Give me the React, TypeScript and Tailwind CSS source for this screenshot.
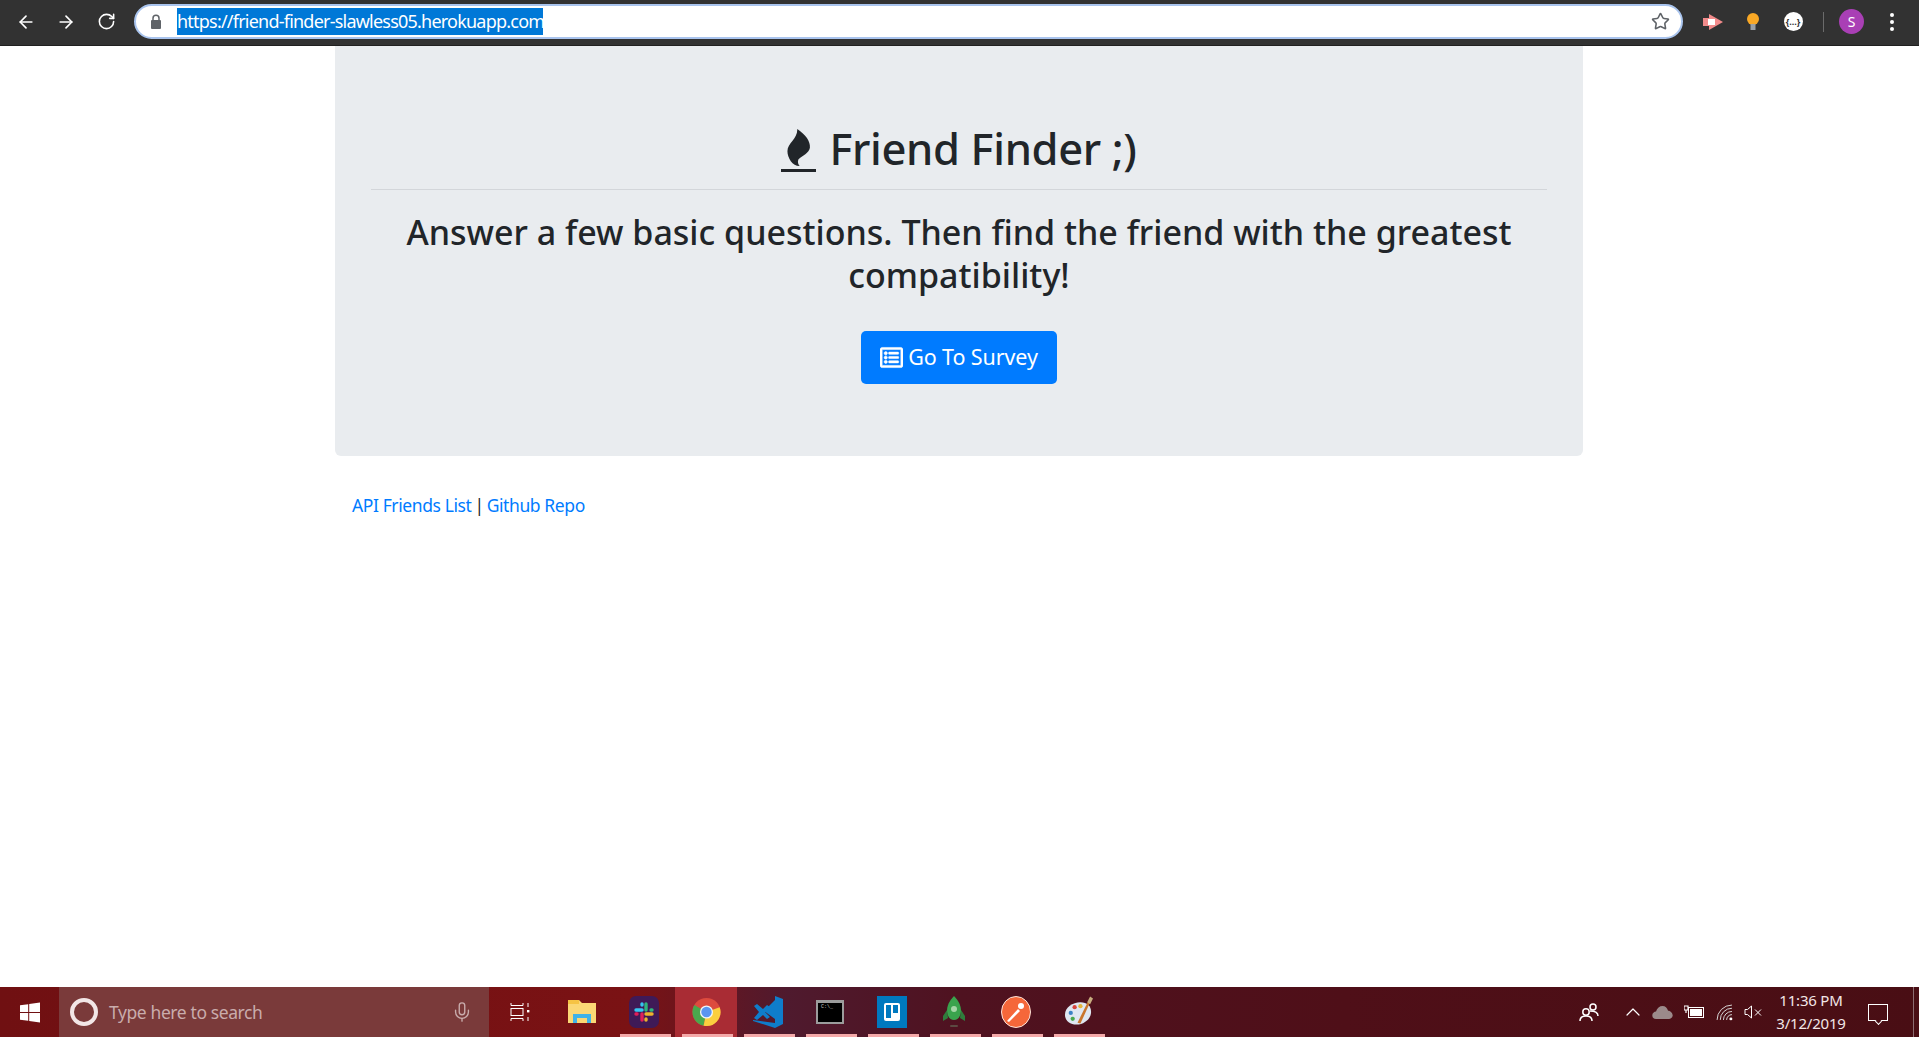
import React from 'react';
import { ArrowLeft, ArrowRight, RotateCw, Star, Mic, ChevronUp } from 'lucide-react';
import { FaRegListAlt } from 'react-icons/fa';

const Flame = () => (
  <span className="inline-flex flex-col items-center w-[35px] mr-[13px] mt-[4px]">
    <svg viewBox="145 78 70 112" className="w-[24px] h-[37px] fill-[#212529]">
      <path d="M175 78C200 95 215 115 213 135C211 150 190 160 178 170C175 178 178 185 182 190C160 190 145 165 145 145C145 120 175 110 175 78Z" />
    </svg>
    <span className="mt-[3px] h-[3px] w-[35px] bg-[#212529]" />
  </span>
);

const Browser = () => (
  <header className="h-[46px] shrink-0 flex items-center bg-[#323232] border-b border-[#202020] pl-[6px] pb-[3px] pt-[1px]">
    <div className="w-[40px] flex justify-center text-white"><ArrowLeft size={20} strokeWidth={2} /></div>
    <div className="w-[40px] flex justify-center text-white"><ArrowRight size={20} strokeWidth={2} /></div>
    <div className="w-[40px] flex justify-center text-white"><RotateCw size={19} strokeWidth={2} /></div>
    <div className="ml-[8px] w-[1549px] h-[35px] rounded-full bg-white border-2 border-[#a9c4ee] flex items-center pl-[14px] pr-[11px]">
      <svg viewBox="0 0 12 15" className="w-[12px] h-[15px]">
        <path d="M3 7V4.2a3 3 0 0 1 6 0V7" fill="none" stroke="#5f6368" strokeWidth="1.5" />
        <rect x="1" y="6" width="10" height="9" rx="1" fill="#5f6368" />
      </svg>
      <span className="ml-[15px] h-[27px] leading-[27px] w-[366px] bg-[#0078d7] text-white text-[18px] tracking-[-0.78px] whitespace-nowrap">
        https://friend-finder-slawless05.herokuapp.com
      </span>
      <Star size={19} strokeWidth={2} className="ml-auto text-[#5f6368]" />
    </div>
    <div className="ml-[10px] w-[40px] flex justify-center">
      <svg viewBox="0 0 20 16" className="w-[20px] h-[16px]">
        <path d="M0 4h6V0l14 8-14 8v-4H0z" fill="#f28b8b" />
        <rect x="5" y="5" width="7" height="6" fill="#fff" />
      </svg>
    </div>
    <div className="w-[40px] flex justify-center">
      <svg viewBox="0 0 12 18" className="w-[12px] h-[18px]">
        <circle cx="6" cy="6" r="6" fill="#f9a825" />
        <rect x="3.5" y="11" width="5" height="6" fill="#9aa0a6" />
      </svg>
    </div>
    <div className="w-[40px] flex justify-center">
      <span className="w-[19px] h-[19px] rounded-full bg-white text-[#333] text-[9px] font-bold leading-[19px] text-center">{'{...}'}</span>
    </div>
    <div className="ml-[10px] w-px h-[20px] bg-[#6b6b6b]" />
    <div className="ml-[15px] w-[25px] h-[25px] rounded-full bg-[#a93fb5] text-white text-[14px] leading-[25px] text-center">S</div>
    <div className="ml-[26px] flex flex-col gap-[3px]">
      <span className="w-[4px] h-[4px] rounded-full bg-white" />
      <span className="w-[4px] h-[4px] rounded-full bg-white" />
      <span className="w-[4px] h-[4px] rounded-full bg-white" />
    </div>
  </header>
);

const Slot = ({ children, active, bar }: { children: React.ReactNode; active?: boolean; bar?: boolean }) => (
  <div className={`relative w-[62px] h-full flex items-center justify-center ${active ? 'bg-[#a92c34]' : ''}`}>
    {children}
    {bar && <span className="absolute bottom-0 left-[7px] right-[4px] h-[3px] bg-[#f4a9a9]" />}
  </div>
);

const Files = () => (
  <svg viewBox="0 0 28 26" className="w-[28px] h-[26px]">
    <path d="M0 1h11l3 3h14v20H0z" fill="#fbd775" />
    <rect x="0" y="1" width="11" height="4" fill="#f6c344" />
    <path d="M5 24V15h18v9h-4v-5H9v5z" fill="#3fb2e8" />
    <rect x="9" y="19" width="10" height="5" fill="#fbd775" />
  </svg>
);

const Slack = () => (
  <div className="w-[30px] h-[32px] rounded-[7px] bg-[#3f1a57] flex items-center justify-center">
    <svg viewBox="0 0 20 20" className="w-[20px] h-[20px]" strokeWidth="3.4" strokeLinecap="round">
      <path d="M2 8h6" stroke="#36c5f0" />
      <path d="M12 2v6" stroke="#2eb67d" />
      <path d="M12 12h6" stroke="#ecb22e" />
      <path d="M8 12v6" stroke="#e01e5a" />
      <path d="M8 2v1" stroke="#36c5f0" />
      <path d="M18 8h-1" stroke="#2eb67d" />
      <path d="M12 18v-1" stroke="#ecb22e" />
      <path d="M2 12h1" stroke="#e01e5a" />
    </svg>
  </div>
);

const Chrome = () => (
  <svg viewBox="0 0 30 30" className="w-[29px] h-[30px]">
    <circle cx="15" cy="15" r="14.5" fill="#dd4b3e" />
    <path d="M15 15L2.4 7.7A14.5 14.5 0 0 0 12 29.2z" fill="#4aa84d" />
    <path d="M15 15L28.6 10A14.5 14.5 0 0 1 12 29.2z" fill="#fbcf3f" />
    <circle cx="15" cy="15" r="6.8" fill="#f4f4f4" />
    <circle cx="15" cy="15" r="5.4" fill="#5a95f0" />
  </svg>
);

const VsCode = () => (
  <svg viewBox="0 0 30 32" className="w-[30px] h-[32px]">
    <path d="M22 0l8 3v25l-8 4L0 25l0-1 22 3z" fill="#0f7dcb" />
    <path d="M22 4v19L11 15z" fill="#0f7dcb" />
    <path d="M1 10l3-2 6 5 4-4 3 2-5 5 5 5-3 2-4-4-6 5-3-2 5-6z" fill="#0f7dcb" />
  </svg>
);

const Terminal = () => (
  <div className="w-[28px] h-[24px] bg-black border-2 border-t-[3px] border-[#9c9c9c] relative">
    <span className="absolute left-[3px] top-[2px] text-[5px] leading-[5px] text-[#ccc] font-['Liberation_Mono',monospace]">C:\_</span>
  </div>
);

const Trello = () => (
  <div className="w-[30px] h-[32px] bg-[#0079bf] flex items-center justify-center">
    <div className="w-[16px] h-[18px] bg-white rounded-[2px] flex gap-[2px] p-[2px]">
      <span className="w-[5px] h-[13px] bg-[#0079bf]" />
      <span className="w-[5px] h-[8px] bg-[#0079bf]" />
    </div>
  </div>
);

const Rocket = () => (
  <svg viewBox="0 0 22 32" className="w-[22px] h-[32px]">
    <path d="M11 0C16 5 18 10 18 15C18 20 15 24 11 24C7 24 4 20 4 15C4 10 6 5 11 0Z" fill="#3aa34d" />
    <circle cx="11" cy="13" r="3" fill="#a5d6a7" />
    <path d="M4 14L0 20V25L5 22M18 14L22 20V25L17 22" fill="#2f7d3c" />
    <rect x="7" y="29" width="8" height="2" rx="1" fill="#5c4a42" />
  </svg>
);

const Postman = () => (
  <svg viewBox="0 0 30 32" className="w-[30px] h-[32px]">
    <ellipse cx="15" cy="16" rx="14.5" ry="15.5" fill="#f5673a" stroke="#fbe3da" strokeWidth="1" />
    <path d="M6 25L17 13L19 15L8 26Z" fill="#fff" />
    <circle cx="20" cy="10" r="3" fill="#fff" />
  </svg>
);

const Palette = () => (
  <svg viewBox="0 0 30 32" className="w-[29px] h-[32px]">
    <path d="M1 19C1 11 9 6 17 6C24 6 28 10 28 16C28 23 21 29 13 29C6 29 1 25 1 19Z" fill="#dfe7f1" />
    <circle cx="7" cy="17" r="2.2" fill="#3b82c4" />
    <circle cx="11" cy="11" r="2.2" fill="#d6453d" />
    <circle cx="17" cy="10" r="2.2" fill="#e6b63a" />
    <circle cx="9" cy="23" r="2.2" fill="#4aa84d" />
    <path d="M14 27L25 5L27 6L17 28Z" fill="#c9752b" />
    <path d="M24 6L27 0L30 2L27 8Z" fill="#c8ad7f" />
  </svg>
);

const Taskbar = () => (
  <footer className="h-[50px] shrink-0 flex items-center bg-[linear-gradient(90deg,#701012_0%,#7a1214_33%,#4f1a2e_41%,#4f1220_50%,#4f0f18_70%,#490e14_100%)]">
    <div className="w-[59px] h-full flex items-center justify-center">
      <svg viewBox="0 0 20 20" className="w-[20px] h-[21px] fill-white">
        <path d="M0 2.8L8.2 1.7V9.5H0zM9.2 1.5L20 0V9.5H9.2zM0 10.5H8.2V18.3L0 17.2zM9.2 10.5H20V20L9.2 18.5z" />
      </svg>
    </div>
    <div className="w-[430px] h-full bg-[#7a3a3a] flex items-center pl-[11px] pr-[16px]">
      <span className="w-[28px] h-[28px] rounded-full border-[4px] border-[#f2e6e6]" />
      <span className="ml-[11px] text-[17.5px] text-[#c9acac] tracking-[-0.4px]">Type here to search</span>
      <Mic size={22} strokeWidth={1.5} className="ml-auto text-[#c9acac]" />
    </div>
    <div className="w-[62px] h-full flex items-center justify-center">
      <svg viewBox="0 0 20 18" className="w-[20px] h-[18px]" stroke="#fff" fill="none" strokeWidth="1">
        <path d="M1 0V2.5H13V0M1 18V15.5H13V18" />
        <rect x="1" y="5.5" width="12" height="7" />
        <path d="M18 0V4M18 14V18" />
        <rect x="17" y="7" width="2.4" height="2.4" fill="#fff" strokeWidth="0" />
      </svg>
    </div>
    <Slot><Files /></Slot>
    <Slot bar><Slack /></Slot>
    <Slot active bar><Chrome /></Slot>
    <Slot bar><VsCode /></Slot>
    <Slot bar><Terminal /></Slot>
    <Slot bar><Trello /></Slot>
    <Slot bar><Rocket /></Slot>
    <Slot bar><Postman /></Slot>
    <Slot bar><Palette /></Slot>
    <div className="ml-auto h-full flex items-center text-white">
      <svg viewBox="0 0 20 20" className="w-[20px] h-[20px] mr-[22px]" stroke="#fff" fill="none" strokeWidth="1.5">
        <circle cx="7" cy="10" r="3.2" />
        <path d="M1 19C1 16 3 14 7 14C11 14 13 16 13 19" />
        <circle cx="14" cy="5" r="3" />
        <path d="M11 9C15 9 19 10 19 14" />
      </svg>
      <ChevronUp size={24} strokeWidth={1.2} className="mr-[7px]" />
      <svg viewBox="0 0 22 14" className="w-[21px] h-[13px] mr-[11px] fill-[#9b8a8a]">
        <path d="M4 14C1 14 0 12 0 10C0 8 2 6 4 6C5 2 8 0 11 0C14 0 16 2 17 5C20 5 22 8 22 10C22 12 20 14 18 14Z" />
      </svg>
      <svg viewBox="0 0 20 14" className="w-[20px] h-[14px] mr-[12px]" fill="none" stroke="#fff">
        <rect x="4.5" y="2.5" width="15" height="10" />
        <rect x="6" y="4" width="12" height="7" fill="#fff" stroke="none" />
        <path d="M0 1H4V5H0zM2 5V8" strokeWidth="1.2" />
      </svg>
      <svg viewBox="0 0 16 16" className="w-[17px] h-[17px] mr-[11px]" fill="none" stroke="#ddd" strokeWidth="0.9">
        <path d="M1 15A14 14 0 0 1 15 1M4 15A11 11 0 0 1 15 4M7 15A8 8 0 0 1 15 7M10 15A5 5 0 0 1 15 10" />
        <circle cx="14" cy="14" r="1.4" fill="#fff" stroke="none" />
      </svg>
      <svg viewBox="0 0 18 14" className="w-[18px] h-[14px] mr-[11px]" fill="none" stroke="#fff" strokeWidth="1">
        <path d="M1 4.5H3.5L7.5 1V13L3.5 9.5H1z" />
        <path d="M11 4.5L17 10.5M17 4.5L11 10.5" />
      </svg>
      <div className="w-[76px] text-center text-[15px] leading-[23px] tracking-[-0.2px] text-[#f2e6e6]">
        <div>11:36 PM</div>
        <div>3/12/2019</div>
      </div>
      <div className="ml-[19px] mr-[6px] w-[20px] h-[17px] border border-white relative">
        <span className="absolute -bottom-[4px] left-[7px] w-[5px] h-[5px] rotate-45 border-r border-b border-white bg-[#490e14]" />
      </div>
      <div className="ml-[19px] mr-[5px] h-full w-px bg-[#8c6c70]" />
    </div>
  </footer>
);

export default function App() {
  return (
    <div className="h-[1037px] flex flex-col overflow-hidden bg-white font-['Noto_Sans','Open_Sans',sans-serif] text-[#212529]">
      <Browser />
      <main className="flex-1">
        <section className="ml-[335px] w-[1248px] h-[410px] rounded-b-[6px] bg-[#e9ecef] px-[36px] pt-[72px] text-center">
          <h1 className="flex items-center justify-center h-[60px] text-[43.5px] leading-[60px] font-medium tracking-[-0.35px]">
            <Flame />
            Friend Finder ;)
          </h1>
          <hr className="mt-[11px] border-t border-[#d3d6da]" />
          <h2 className="mt-[21px] text-[34px] leading-[43px] font-medium">
            Answer a few basic questions. Then find the friend with the greatest compatibility!
          </h2>
          <button className="mt-[34px] inline-flex items-center h-[53px] w-[196px] justify-center rounded-[5px] bg-[#007bff] text-white text-[21.5px] tracking-[-0.1px]">
            <FaRegListAlt className="w-[23px] h-[23px] mr-[5px] stroke-white stroke-[12]" />
            Go To Survey
          </button>
        </section>
        <p className="ml-[335px] w-[1248px] pl-[17px] mt-[36px] text-[17.5px] leading-[26px] tracking-[-0.4px]">
          <a className="text-[#007bff]">API Friends List</a> <span className="mx-[-1.2px]">|</span> <a className="text-[#007bff]">Github Repo</a>
        </p>
      </main>
      <Taskbar />
    </div>
  );
}
